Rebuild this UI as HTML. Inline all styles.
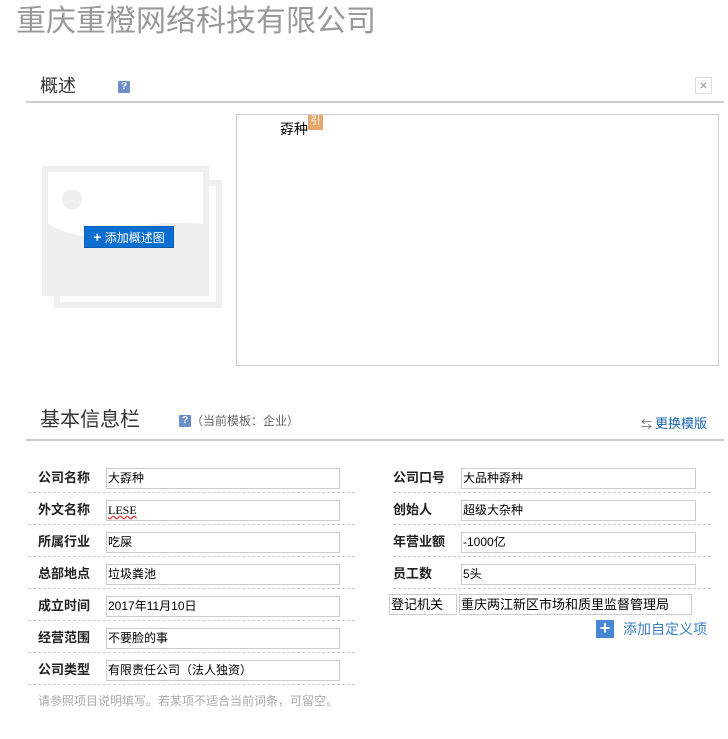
<!DOCTYPE html>
<html><head><meta charset="utf-8"><style>
*{margin:0;padding:0;box-sizing:border-box}
body{width:728px;height:739px;background:#fff;font-family:"Liberation Sans","Noto Sans CJK SC",sans-serif;position:relative;overflow:hidden;color:#333}
.a{position:absolute;white-space:nowrap}
.q{position:absolute;width:12px;height:12px;background:#6c8fc9;color:#fff;font-size:10px;font-weight:bold;line-height:12px;text-align:center;border-radius:1px}
.lbl{position:absolute;font-size:13px;font-weight:bold;color:#222;line-height:20px}
.inp{position:absolute;height:21px;border:1px solid #ccc;font-size:12px;line-height:19px;padding-left:1px;color:#000;background:#fff}
.dot{position:absolute;height:0;border-top:1px dashed #ccc}
</style></head><body>
<div class="a" style="left:16px;top:4px;font-size:30px;line-height:36px;color:#999">重庆重橙网络科技有限公司</div>

<div class="a" style="left:40px;top:74px;font-size:18px;line-height:24px;color:#333">概述</div>
<div class="q" style="left:118px;top:81px">?</div>
<div class="a" style="left:695px;top:77px;width:17px;height:17px;border:1px solid #ddd;color:#999;font-size:14px;line-height:15px;text-align:center">×</div>
<div class="a" style="left:26px;top:101px;width:698px;height:2px;background:#ccc"></div>

<svg class="a" style="left:40px;top:164px" width="184" height="146">
<rect x="17" y="19" width="162" height="122" fill="none" stroke="#efefef" stroke-width="6"/>
<rect x="2" y="2" width="167" height="130" fill="#efefef"/>
<path d="M8 8 H163 V60 Q110 55 70 70 Q40 78 8 60 Z" fill="#fff"/>
<circle cx="32" cy="35" r="10" fill="#efefef"/>
</svg>
<div class="a" style="left:84px;top:226px;width:90px;height:22px;background:#0c6fd0;border:1px solid #0a5fb5;color:#fff;font-size:12px;line-height:20px;text-align:center"><b style="font-size:14px">+</b> 添加概述图</div>

<div class="a" style="left:236px;top:114px;width:483px;height:252px;border:1px solid #ccc"></div>
<div class="a" style="left:280px;top:120px;font-size:14px;line-height:18px;color:#000">孬种</div>
<div class="a" style="left:308px;top:115px;width:15px;height:15px;background:#e8a66a;color:#fff;font-size:10px;line-height:14px;text-align:center">引</div>

<div class="a" style="left:40px;top:407px;font-size:20px;line-height:26px;color:#333">基本信息栏</div>
<div class="q" style="left:179px;top:415px">?</div>
<div class="a" style="left:191px;top:412px;font-size:12px;line-height:18px;color:#666">（当前模板：企业）</div>
<div class="a" style="left:641px;top:418px;font-size:11px;color:#666;line-height:14px">⇆</div>
<div class="a" style="left:655px;top:415px;font-size:13px;line-height:18px;color:#1465b0">更换模版</div>
<div class="a" style="left:26px;top:439px;width:698px;height:2px;background:#ccc"></div>

<div class="lbl" style="left:38px;top:468px">公司名称</div><div class="inp" style="left:106px;top:468px;width:234px">大孬种</div><div class="dot" style="left:28px;top:492px;width:327px"></div>
<div class="lbl" style="left:38px;top:500px">外文名称</div><div class="inp" style="left:106px;top:500px;width:234px"><span style="text-decoration:underline wavy #d33;font-family:'Liberation Serif',serif">LESE</span></div><div class="dot" style="left:28px;top:524px;width:327px"></div>
<div class="lbl" style="left:38px;top:532px">所属行业</div><div class="inp" style="left:106px;top:532px;width:234px">吃屎</div><div class="dot" style="left:28px;top:556px;width:327px"></div>
<div class="lbl" style="left:38px;top:564px">总部地点</div><div class="inp" style="left:106px;top:564px;width:234px">垃圾粪池</div><div class="dot" style="left:28px;top:588px;width:327px"></div>
<div class="lbl" style="left:38px;top:596px">成立时间</div><div class="inp" style="left:106px;top:596px;width:234px">2017年11月10日</div><div class="dot" style="left:28px;top:620px;width:327px"></div>
<div class="lbl" style="left:38px;top:628px">经营范围</div><div class="inp" style="left:106px;top:628px;width:234px">不要脸的事</div><div class="dot" style="left:28px;top:652px;width:327px"></div>
<div class="lbl" style="left:38px;top:660px">公司类型</div><div class="inp" style="left:106px;top:660px;width:234px">有限责任公司（法人独资）</div><div class="dot" style="left:28px;top:684px;width:327px"></div>
<div class="a" style="left:38px;top:692px;font-size:12px;line-height:18px;color:#aaa">请参照项目说明填写。若某项不适合当前词条，可留空。</div>

<div class="lbl" style="left:393px;top:468px">公司口号</div><div class="inp" style="left:461px;top:468px;width:235px">大品种孬种</div><div class="dot" style="left:393px;top:492px;width:318px"></div>
<div class="lbl" style="left:393px;top:500px">创始人</div><div class="inp" style="left:461px;top:500px;width:235px">超级大杂种</div><div class="dot" style="left:393px;top:524px;width:318px"></div>
<div class="lbl" style="left:393px;top:532px">年营业额</div><div class="inp" style="left:461px;top:532px;width:235px">-1000亿</div><div class="dot" style="left:393px;top:556px;width:318px"></div>
<div class="lbl" style="left:393px;top:564px">员工数</div><div class="inp" style="left:461px;top:564px;width:235px">5头</div><div class="dot" style="left:393px;top:588px;width:318px"></div>
<div class="inp" style="left:389px;top:594px;width:68px;font-size:13px">登记机关</div><div class="inp" style="left:459px;top:594px;width:233px;font-size:13px">重庆两江新区市场和质里监督管理局</div>
<div class="a" style="left:596px;top:620px;width:18px;height:18px;background:#4a86d6;color:#fff;font-size:18px;font-weight:bold;line-height:17px;text-align:center">+</div>
<div class="a" style="left:623px;top:619px;font-size:14px;line-height:20px;color:#3a7fc4">添加自定义项</div>
</body></html>
